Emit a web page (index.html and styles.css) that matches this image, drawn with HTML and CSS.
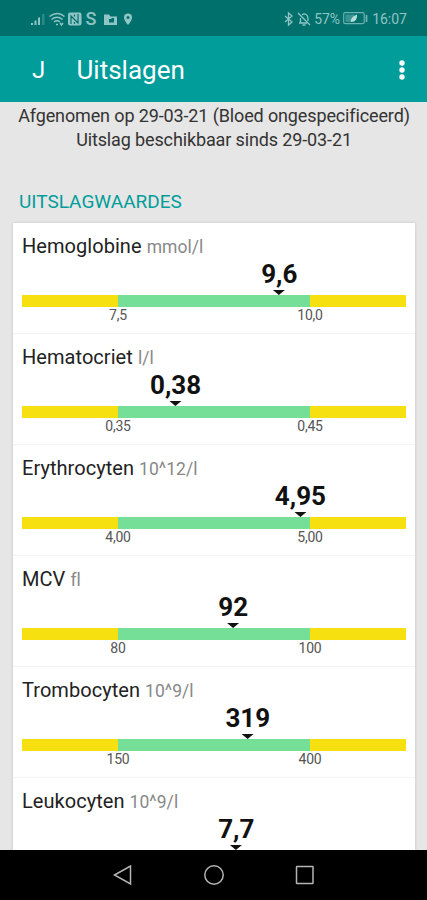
FILE: index.html
```html
<!DOCTYPE html>
<html lang="nl">
<head>
    <meta charset="UTF-8">
    <meta name="viewport" content="width=device-width, initial-scale=1">
    <title>Uitslagen</title>
    <link rel="stylesheet" href="styles.css">
</head>
<body>
    <div class="phone">
        <div class="status-bar">
            <svg class="status-icons" width="106" height="18" viewBox="0 -1 106 18">
                <!-- signal -->
                <path d="M1 12h2v2H1zM4.500 9.500h2V14h-2zM8 6.500h2V14H8z" fill="#8fc5c4"/>
                <path d="M12 3h2.500v11H12z" fill="#2b8987"/>
                <!-- wifi -->
                <g fill="none" stroke="#8fc5c4" stroke-width="1.500">
                    <path d="M19.500 5.500q8-6 15 0M21.500 8.500q5.500-4.500 11 0M24 11q3-2.500 6 0"/>
                    <path d="M26 13.500h2M30 12l1.500 2 1.500-2"/>
                </g>
                <!-- nfc -->
                <rect x="38" y="1.500" width="13.500" height="13" rx="2" fill="#8fc5c4"/>
                <path d="M41 13V5l7 7V3M44.500 3.500v2M44.500 11v2" fill="none" stroke="#00706d" stroke-width="1.200"/>
                <text x="55.500" y="14.300" class="status-letter">S</text>
                <!-- folder -->
                <path d="M74 3.500h5l1.500 2H87v8.500H74z" fill="#8fc5c4"/>
                <path d="M79 11.500V8h2l1-1h2v4.500z" fill="#00706d"/>
                <!-- location -->
                <path d="M98 2.500a4 4 0 0 0-4 4c0 3 4 7.500 4 7.500s4-4.500 4-7.500a4 4 0 0 0-4-4zm0 2.500a1.500 1.500 0 1 1 0 3 1.500 1.500 0 0 1 0-3z" fill="#8fc5c4"/>
            </svg>
            <div class="status-right">
                <svg width="28" height="16" viewBox="0 0 28 16" fill="none" stroke="#8fc5c4" stroke-width="1.300">
                    <!-- bluetooth -->
                    <path d="M1 5l7 6-3.500 3V2L8 5l-7 6"/>
                    <!-- muted bell -->
                    <path d="M14 2l12 12M15 12h8M16.500 12V7M18 4q2-2 4-.5 2 1 2 4v2.500M18.500 14h3"/>
                </svg>
                <span class="battery-level">57%</span>
                <svg class="battery" width="25" height="13" viewBox="0 0 25 13">
                    <rect x=".7" y=".7" width="20.500" height="11" rx="1.500" fill="none" stroke="#6db1b0" stroke-width="1.200"/>
                    <rect x="2.500" y="2.500" width="9" height="7.500" fill="#3a9492"/>
                    <path d="M23.500 3v7" stroke="#6db1b0" stroke-width="1.800"/>
                    <path d="M8 10q-1-5 6-7.500Q15 9 8 10z" fill="#b9dddc"/>
                </svg>
                <span class="clock">16:07</span>
            </div>
        </div>

        <header class="app-bar">
            <span class="initial">J</span>
            <h1>Uitslagen</h1>
            <svg class="menu" width="8" height="22" viewBox="0 0 8 22" fill="#fff">
                <circle cx="4" cy="4" r="2.700"/>
                <circle cx="4" cy="11" r="2.700"/>
                <circle cx="4" cy="18" r="2.700"/>
            </svg>
        </header>

        <main class="content">
            <div class="intro">
                <p class="taken">Afgenomen op 29-03-21 (Bloed ongespecificeerd)</p>
                <p class="available">Uitslag beschikbaar sinds 29-03-21</p>
            </div>
            <h2>UITSLAGWAARDES</h2>
            <div class="card" id="results"></div>
        </main>

        <nav class="nav-bar">
            <svg width="22" height="22" viewBox="0 0 22 22"><path d="M2.500 11L18.500 2v18z"/></svg>
            <svg width="22" height="22" viewBox="0 0 22 22"><circle cx="11" cy="11" r="9.200"/></svg>
            <svg width="22" height="22" viewBox="0 0 22 22"><rect x="2.500" y="2.500" width="16.500" height="17" rx=".5"/></svg>
        </nav>
    </div>

    <script>
        // pos is the place of the value on the bar, in percent
        const results = [
            { name: 'Hemoglobine', unit: 'mmol/l', value: '9,6', low: '7,5', high: '10,0', pos: 67 },
            { name: 'Hematocriet', unit: 'l/l', value: '0,38', low: '0,35', high: '0,45', pos: 40 },
            { name: 'Erythrocyten', unit: '10^12/l', value: '4,95', low: '4,00', high: '5,00', pos: 72.5 },
            { name: 'MCV', unit: 'fl', value: '92', low: '80', high: '100', pos: 55 },
            { name: 'Trombocyten', unit: '10^9/l', value: '319', low: '150', high: '400', pos: 58.8 },
            { name: 'Leukocyten', unit: '10^9/l', value: '7,7', low: '', high: '', pos: 55.8 }
        ];

        document.getElementById('results').innerHTML = results.map(r => `
            <section class="result">
                <div class="result-name">${r.name} <span class="unit">${r.unit}</span></div>
                <div class="range">
                    <div class="marker" style="left: ${r.pos}%">${r.value}</div>
                    <div class="bar"></div>
                    <div class="limits"><span>${r.low}</span><span>${r.high}</span></div>
                </div>
            </section>
        `).join('');
    </script>
</body>
</html>
```
FILE: styles.css
```css
* {
    margin: 0;
    padding: 0;
    box-sizing: border-box;
}

body {
    font-family: Roboto, sans-serif;
    background: #e6e6e6;
    color: #222;
}

svg {
    display: block;
}

.phone {
    display: flex;
    flex-direction: column;
    height: 900px;
    overflow: hidden;
}

.status-bar {
    display: flex;
    flex: none;
    align-items: center;
    justify-content: space-between;
    height: 36px;
    padding: 1px 20px 0 30px;
    background: #00706d;
    color: #8fc5c4;
}

.status-letter {
    font-size: 18px;
    font-weight: 500;
    fill: #8fc5c4;
}

.status-right {
    display: flex;
    align-items: center;
    font-size: 14px;
}

.battery-level {
    margin-left: 2px;
}

.battery {
    margin: 0 4px 0 3px;
}

.app-bar {
    display: flex;
    flex: none;
    align-items: center;
    height: 66px;
    padding: 2px 21px 0 32px;
    background: #009d9a;
    color: #fff;
}

.initial {
    width: 44.5px;
    font-size: 24px;
}

h1 {
    font-size: 26px;
    font-weight: 400;
}

.menu {
    margin-left: auto;
}

.content {
    flex: 1;
    min-height: 0;
    overflow: hidden;
    padding: 2px 12px 0 13px;
}

.intro {
    font-size: 18px;
    letter-spacing: -0.13px;
    line-height: 24px;
    text-align: center;
    white-space: nowrap;
    color: #333;
}

h2 {
    margin: 38px 0 9px 6px;
    font-size: 19px;
    font-weight: 400;
    line-height: 24px;
    color: #009d9a;
}

.card {
    background: #fff;
    box-shadow: 0 0 3px rgba(0, 0, 0, 0.15);
}

.result {
    height: 111px;
    padding: 11px 9px 0;
    border-bottom: 1px solid #f4f4f4;
}

.result-name {
    font-size: 20px;
    letter-spacing: 0.05px;
    line-height: 24px;
}

.unit {
    font-size: 17.5px;
    color: #888;
}

.range {
    position: relative;
    padding-top: 37px;
    margin-top: -1px;
}

.marker {
    position: absolute;
    top: 1px;
    transform: translateX(-50%);
    font-size: 26px;
    font-weight: 700;
    line-height: 31px;
    color: #111;
}

.marker::after {
    content: "";
    display: block;
    width: 0;
    margin: 0 auto;
    border: 6px solid transparent;
    border-top: 5px solid #111;
    border-bottom: 0;
}

.bar {
    height: 12px;
    background: linear-gradient(to right, #f6e010 25%, #75df98 25%, #75df98 75%, #f6e010 75%);
}

.limits {
    display: flex;
    padding: 0 48px;
    font-size: 14px;
    letter-spacing: -0.2px;
    line-height: 17px;
    text-align: center;
    color: #555;
}

.limits span {
    width: 96px;
}

.limits span:last-child {
    margin-left: auto;
}

.nav-bar {
    display: flex;
    flex: none;
    align-items: center;
    justify-content: center;
    gap: 69px;
    height: 50px;
    background: #000;
}

.nav-bar svg {
    fill: none;
    stroke: #b5b5b5;
    stroke-width: 1.5;
}
```
